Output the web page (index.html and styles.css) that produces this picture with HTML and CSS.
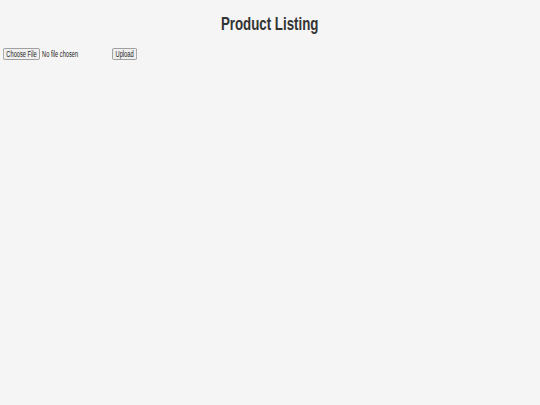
FILE: index.html
```html
<!DOCTYPE html>
<html lang="en">
<head>
<meta charset="utf-8">
<title>Product Listing</title>
<link rel="stylesheet" href="styles.css">
</head>
<body>
<h1 class="title"><span class="title-text">Product Listing</span></h1>
<form class="upload-form">
  <div class="file-field">
    <button type="button" class="btn">Choose File</button>
    <span class="file-name">No file chosen</span>
  </div>
  <button type="submit" class="btn">Upload</button>
</form>
</body>
</html>
```
FILE: styles.css
```css
html, body {
  margin: 0;
  background: #f5f5f5;
}
body {
  padding: 0 3px;
  font-family: "Liberation Sans", Arial, sans-serif;
}
.title {
  margin: 0;
  padding: 12px 0 10px;
  text-align: center;
  font-size: 19px;
  line-height: 23px;
  font-weight: bold;
  color: #333;
}
.title-text {
  display: inline-block;
  transform: scaleX(0.7);
  transform-origin: center;
}
.upload-form {
  display: flex;
  align-items: center;
  padding-top: 3px;
  transform: scaleX(0.67);
  transform-origin: left center;
}
.file-field {
  display: flex;
  align-items: center;
  width: 163px;
}
.btn {
  height: 12px;
  padding: 0 4px;
  font-family: inherit;
  font-size: 8.5px;
  line-height: 10px;
  color: #222;
  background: #efefef;
  border: 1px solid #8f8f8f;
  border-radius: 2px;
}
.file-name {
  margin-left: 3px;
  font-size: 8.5px;
  color: #222;
}
```
